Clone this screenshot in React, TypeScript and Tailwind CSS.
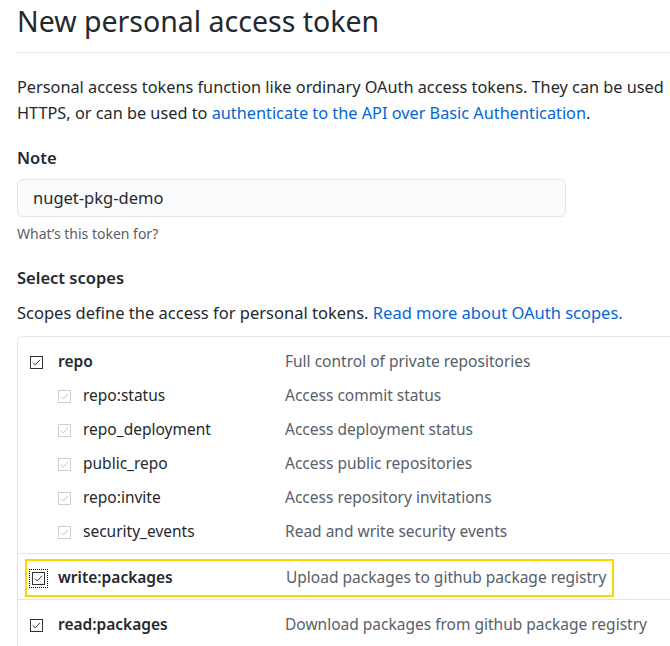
const scopes = [
  { name: "repo:status", desc: "Access commit status" },
  { name: "repo_deployment", desc: "Access deployment status" },
  { name: "public_repo", desc: "Access public repositories" },
  { name: "repo:invite", desc: "Access repository invitations" },
  { name: "security_events", desc: "Read and write security events" },
];

const Check = ({ disabled = false, focus = false }: { disabled?: boolean; focus?: boolean }) => (
  <span
    className={
      focus
        ? "flex items-center justify-center w-[17px] h-[17px] outline-1 outline-dotted outline-black -ml-[2px] mr-[-2px]"
        : "flex items-center justify-center w-[13px] h-[13px]"
    }
  >
    <svg width="13" height="13" viewBox="0 0 13 13">
      <rect
        x="0.5"
        y="0.5"
        width="12"
        height="12"
        fill="white"
        stroke={disabled ? "#cfcfcf" : "#333333"}
      />
      <path
        d="M3 6.5 L5.3 9 L10 3.8"
        fill="none"
        stroke={disabled ? "#c8c8c8" : "#333333"}
        strokeWidth="1"
      />
    </svg>
  </span>
);

const App = () => {
  return (
    <div
      className="w-[670px] h-[646px] overflow-hidden bg-white pl-[17px] text-[#24292e]"
      style={{ fontFamily: '"Noto Sans", "Open Sans", sans-serif' }}
    >
      <h2 className="text-[28.5px] leading-[40px] pt-[1px] pb-[11px] border-b border-[#e1e4e8] w-[700px]">
        New personal access token
      </h2>

      <p className="mt-[21px] text-[16.3px] leading-[26px] whitespace-nowrap">
        Personal access tokens function like ordinary OAuth access tokens. They can be used
        <br />
        HTTPS, or can be used to{" "}
        <a className="text-[#0366d6]">authenticate to the API over Basic Authentication</a>.
      </p>

      <div className="mt-[19px] text-[16.5px] font-semibold leading-[26px]">Note</div>
      <div className="mt-[8px] w-[549px] h-[38px] rounded-[6px] border border-[#e1e4e8] bg-[#fafbfc] flex items-center px-[15px] text-[16.5px]">
        nuget-pkg-demo
      </div>
      <div className="mt-[7px] text-[14px] leading-[20px] text-[#586069]">What’s this token for?</div>

      <div className="mt-[21px] text-[16.5px] font-semibold leading-[26px]">Select scopes</div>
      <p className="mt-[9px] text-[16.5px] leading-[26px] whitespace-nowrap">
        Scopes define the access for personal tokens.{" "}
        <a className="text-[#0366d6]">Read more about OAuth scopes.</a>
      </p>

      <div className="mt-[10px] w-[720px] border border-[#e1e4e8] rounded-tl-[6px] text-[15.5px]">
        <div className="pt-[8px] pb-[4px]">
          <div className="h-[34px] flex items-center">
            <div className="w-[40px] pl-[12px] flex items-center">
              <Check />
            </div>
            <div className="w-[227px] font-semibold">repo</div>
            <div className="text-[#586069]">Full control of private repositories</div>
          </div>
          {scopes.map((s) => (
            <div key={s.name} className="h-[34px] flex items-center">
              <div className="w-[65px] pl-[40px] flex items-center">
                <Check disabled />
              </div>
              <div className="w-[202px]">{s.name}</div>
              <div className="text-[#586069]">{s.desc}</div>
            </div>
          ))}
        </div>

        <div className="border-t border-[#e1e4e8] pt-[5px] pb-[2px]">
          <div className="ml-[7px] w-[589px] h-[38px] border-2 border-[#fcd800] flex items-center">
            <div className="w-[31px] pl-[5px] flex items-center">
              <Check focus />
            </div>
            <div className="w-[228px] font-semibold">write:packages</div>
            <div className="text-[#586069]">Upload packages to github package registry</div>
          </div>
        </div>

        <div className="border-t border-[#e1e4e8] pt-[8px] pb-[10px]">
          <div className="h-[34px] flex items-center">
            <div className="w-[40px] pl-[12px] flex items-center">
              <Check />
            </div>
            <div className="w-[227px] font-semibold">read:packages</div>
            <div className="text-[#586069]">Download packages from github package registry</div>
          </div>
        </div>
      </div>
    </div>
  );
};

export default App;
